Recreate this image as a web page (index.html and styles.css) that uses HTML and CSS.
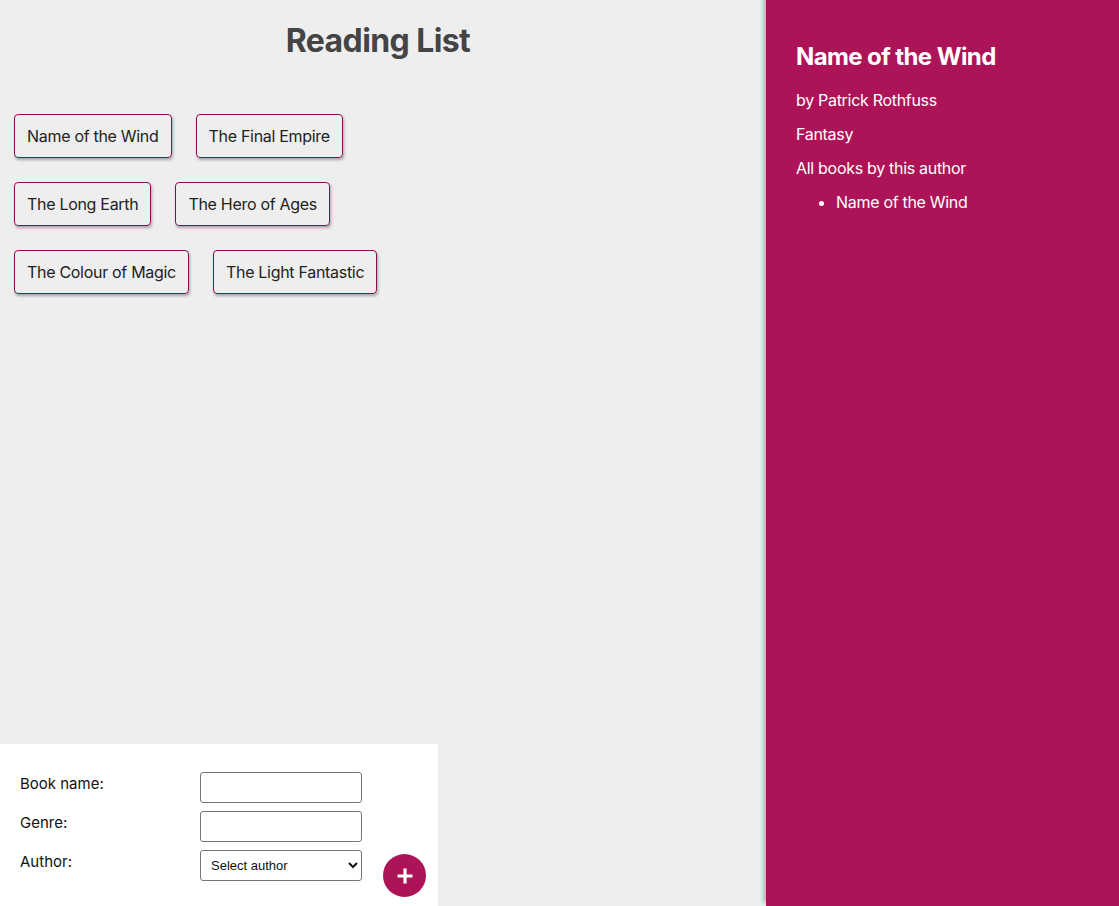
FILE: index.html
```html
<!DOCTYPE html>
<html>
<head>
<meta charset="utf-8">
<title>Reading List</title>
<link rel="stylesheet" href="styles.css">
</head>
<body>
<div class="main">
  <h1 class="title">Reading List</h1>
  <ul class="book-list">
    <li class="book">Name of the Wind</li>
    <li class="book">The Final Empire</li>
    <li class="book">The Long Earth</li>
    <li class="book">The Hero of Ages</li>
    <li class="book">The Colour of Magic</li>
    <li class="book">The Light Fantastic</li>
  </ul>
  <form class="add-book">
    <div class="fields">
      <label class="field-label">Book name:</label>
      <input class="field-input" type="text">
      <label class="field-label">Genre:</label>
      <input class="field-input" type="text">
      <label class="field-label">Author:</label>
      <select class="field-select"><option>Select author</option></select>
    </div>
    <button class="add-btn" type="button">
      <svg width="18" height="18" viewBox="0 0 18 18"><path d="M9 1.5v15M1.5 9h15" stroke="#fff" stroke-width="3.2" stroke-linecap="butt"/></svg>
    </button>
  </form>
</div>
<div class="details">
  <h2 class="details-title">Name of the Wind</h2>
  <p class="details-text">by Patrick Rothfuss</p>
  <p class="details-text">Fantasy</p>
  <p class="details-text">All books by this author</p>
  <ul class="author-books">
    <li>Name of the Wind</li>
  </ul>
</div>
</body>
</html>
```
FILE: styles.css
```css
html, body {
  margin: 0;
  padding: 0;
  height: 100%;
}
body {
  display: flex;
  font-family: Inter, "Noto Sans", sans-serif;
  background: #eee;
  overflow: hidden;
}
.main {
  width: 766px;
  height: 100%;
  display: flex;
  flex-direction: column;
  background: #eee;
}
.title {
  margin: 22px 0 0;
  text-align: center;
  color: #444;
  font-size: 32px;
  font-weight: 700;
  line-height: 38px;
  letter-spacing: -0.6px;
  padding-right: 10px;
}
.book-list {
  list-style: none;
  margin: 54px 0 0 14px;
  padding: 0;
  width: 400px;
  display: flex;
  flex-wrap: wrap;
  column-gap: 24px;
  row-gap: 24px;
}
.book {
  border: 1px solid #880E4F;
  border-radius: 4px;
  padding: 11px 12px;
  font-size: 16px;
  line-height: 20px;
  letter-spacing: -0.3px;
  color: #222;
  box-shadow: 1px 2px 3px rgba(0,0,0,0.3);
}
.add-book {
  margin-top: auto;
  width: 438px;
  box-sizing: border-box;
  background: #fff;
  padding: 28px 0 25px 20px;
  display: flex;
  align-items: flex-end;
}
.fields {
  display: grid;
  grid-template-columns: 180px 162px;
  row-gap: 8px;
  flex-shrink: 0;
}
.field-label {
  font-size: 15px;
  color: #111;
  line-height: 19px;
  padding-top: 2px;
}
.field-input, .field-select {
  box-sizing: border-box;
  width: 162px;
  height: 31px;
  border: 1px solid #767676;
  border-radius: 3px;
  background: #fff;
  margin: 0;
}
.field-select {
  font-family: "Liberation Sans", Arial, sans-serif;
  font-size: 13px;
  padding: 0 4px 0 6px;
  color: #111;
}
.add-btn {
  flex-shrink: 0;
  width: 43px;
  height: 43px;
  border-radius: 50%;
  border: 0;
  background: #AD1457;
  margin: 0 0 -16px 21px;
  padding: 0;
  display: flex;
  align-items: center;
  justify-content: center;
}
.details {
  flex: 1;
  height: 100%;
  box-sizing: border-box;
  background: #AD1457;
  color: #fff;
  padding: 30px;
  box-shadow: -2px -3px 5px rgba(0,0,0,0.3);
  position: relative;
}
.details-title {
  margin: 12px 0 19px;
  font-size: 24px;
  line-height: 30px;
  font-weight: 700;
  letter-spacing: -0.6px;
}
.details-text {
  margin: 0 0 15px;
  font-size: 16px;
  line-height: 19px;
  letter-spacing: -0.3px;
}
.author-books {
  margin: 0;
  padding-left: 40px;
  font-size: 16px;
  line-height: 19px;
  letter-spacing: -0.3px;
}
```
